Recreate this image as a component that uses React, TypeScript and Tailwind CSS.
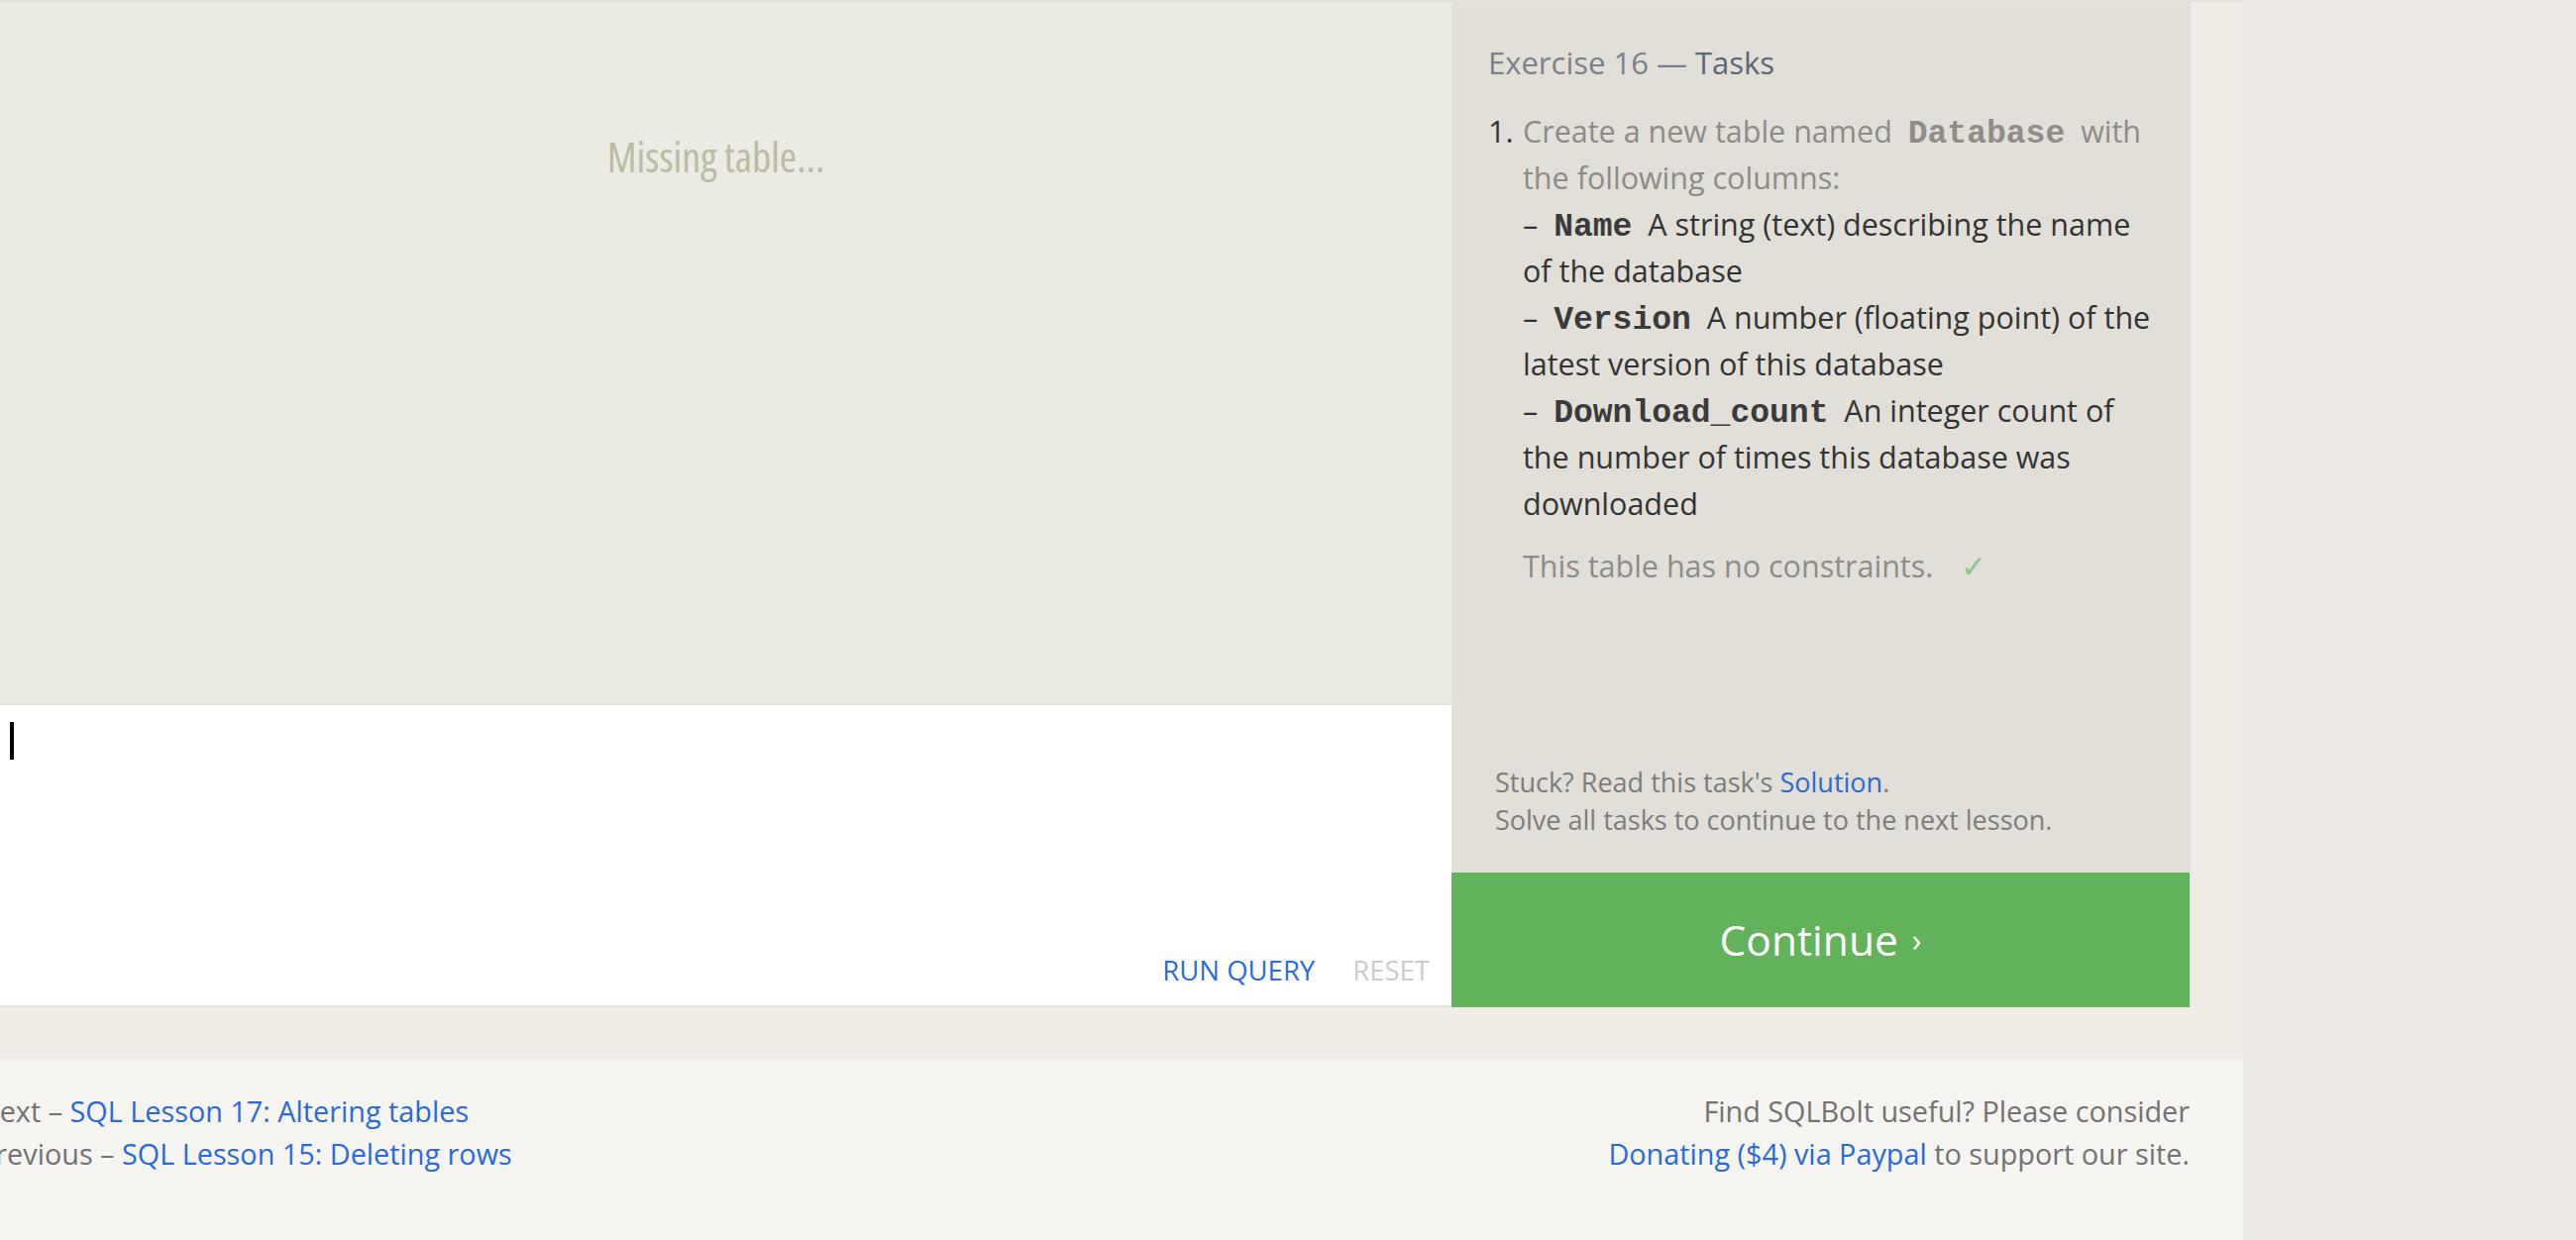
import React from 'react';

const sans = "font-['Open_Sans',sans-serif]";
const mono = "font-['Liberation_Mono',monospace] font-bold";

const Code: React.FC<{ children: React.ReactNode; dim?: boolean }> = ({ children, dim }) => (
  <code className={`${mono} px-[8px] text-[33px] leading-none ${dim ? 'text-[#8e8d88]' : 'text-[#3a3a3a]'}`}>{children}</code>
);

const TaskPanel: React.FC = () => (
  <div className="w-[747px] flex flex-col border-r-2 border-[#e8e6e0]">
    <div className="flex-1 bg-[#e1dfd8] pl-[37px] pr-[10px] pt-[42px] pb-[34px] flex flex-col">
      <h2 className="text-[31px] leading-[38px] text-[#7b808b]">
        Exercise 16 — <span className="text-[#5f6676]">Tasks</span>
      </h2>
      <div className="mt-[27px] flex text-[30.5px] leading-[47px] whitespace-nowrap">
        <span className="w-[35px] shrink-0 text-[#333]">1.</span>
        <div>
          <p className="text-[#8c8b86]">
            Create a new table named <Code dim>Database</Code> with
            <br />
            the following columns:
          </p>
          <p className="text-[#333]">
            – <Code>Name</Code> A string (text) describing the name
            <br />
            of the database
          </p>
          <p className="text-[#333]">
            – <Code>Version</Code> A number (floating point) of the
            <br />
            latest version of this database
          </p>
          <p className="text-[#333]">
            – <Code>Download_count</Code> An integer count of
            <br />
            the number of times this database was
            <br />
            downloaded
          </p>
          <p className="mt-[16px] text-[#8c8b86]">
            This table has no constraints.
            <span className="ml-[28px] text-[#8cc98a]">✓</span>
          </p>
        </div>
      </div>
      <div className="mt-auto text-[27px] leading-[38px] text-[#7d7c78] pl-[7px]">
        <p>
          Stuck? Read this task's <a className="text-[#2a6ad6]">Solution</a>.
        </p>
        <p>Solve all tasks to continue to the next lesson.</p>
      </div>
    </div>
    <button className="h-[136px] bg-[#61b25a] text-white text-[42.5px] flex items-center justify-center gap-[14px]">
      Continue <span className="text-[32px]">›</span>
    </button>
  </div>
);

const App: React.FC = () => {
  return (
    <div className={`min-h-screen w-full flex ${sans} bg-gradient-to-r from-[#e2dfdb] via-[#ebe8e5] to-[#ece9e6]`}>
      <div className="w-[2264px] shrink-0 flex flex-col">
        <div className="h-[1070px] bg-[#efece5] rounded-br-[10px] border-t-2 border-[#e3e1da]">
          <div className="flex">
            <div className="w-[1465px] flex flex-col">
              <div className="h-[710px] bg-[#ebeae3] border-b-2 border-[#e3e2db] flex justify-center pt-[128px]">
                <p className="[font-stretch:87.5%] text-[42px] leading-[56px] text-[#bcbba4] h-fit pr-[20px]">
                  Missing table…
                </p>
              </div>
              <div className="h-[305px] bg-white border-b-2 border-[#e5e3dc] flex flex-col pl-[10px] pr-[22px] pt-[17px] pb-[15px]">
                <div className="w-[4px] h-[38px] bg-black" />
                <div className="mt-auto flex justify-end gap-[38px] text-[27.5px] leading-[40px]">
                  <span className="text-[#2d6bd8]">RUN QUERY</span>
                  <span className="text-[#cccccc]">RESET</span>
                </div>
              </div>
            </div>
            <TaskPanel />
          </div>
        </div>
        <div className="flex-1 bg-[#f5f4f0] flex justify-between pr-[54px] pt-[30px] text-[28.8px] leading-[43px] text-[#727272]">
          <div className="-ml-[22px]">
            <p>
              Next – <a className="text-[#2a6ad6]">SQL Lesson 17: Altering tables</a>
            </p>
            <p>
              Previous – <a className="text-[#2a6ad6]">SQL Lesson 15: Deleting rows</a>
            </p>
          </div>
          <div className="text-right">
            <p>Find SQLBolt useful? Please consider</p>
            <p>
              <a className="text-[#2a6ad6]">Donating ($4) via Paypal</a> to support our site.
            </p>
          </div>
        </div>
      </div>
      <div className="flex-1" />
    </div>
  );
};

export default App;
